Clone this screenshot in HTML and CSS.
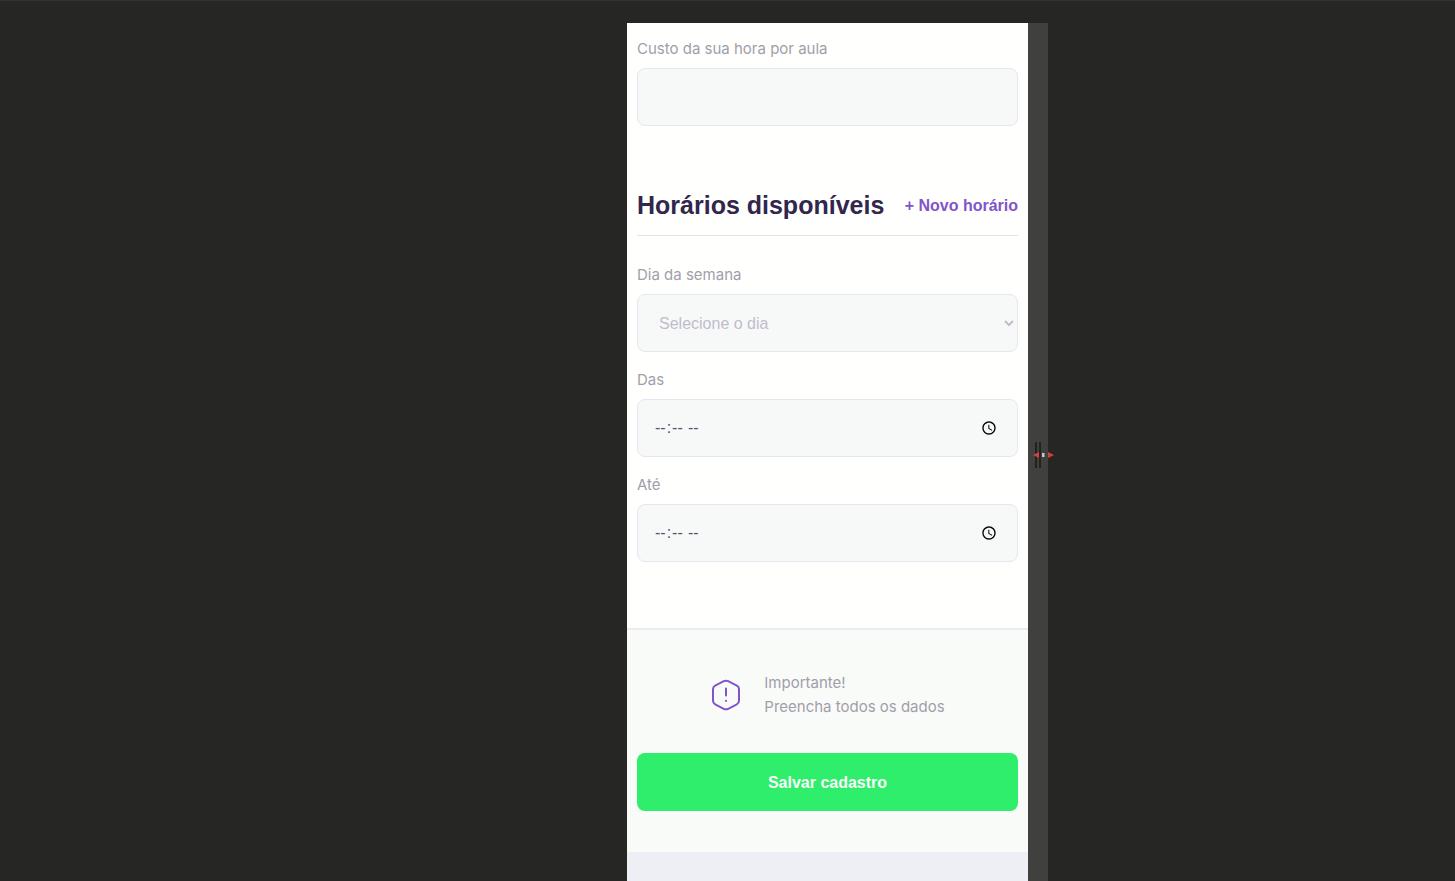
FILE: index.html
```html
<!DOCTYPE html>
<html lang="pt-BR">
<head>
<meta charset="utf-8">
<title>Cadastro</title>
<meta name="viewport" content="width=device-width, initial-scale=1">
<link rel="stylesheet" href="styles.css">
</head>
<body>
<div class="stage">
  <main class="screen">
    <form class="form">
      <section class="fields">
        <div class="field">
          <label for="cost">Custo da sua hora por aula</label>
          <input class="control" type="text" id="cost">
        </div>
        <div class="section-head">
          <h2>Horários disponíveis</h2>
          <button class="add" type="button">+ Novo horário</button>
        </div>
        <div class="field">
          <label for="day">Dia da semana</label>
          <select class="control select" id="day">
            <option>Selecione o dia</option>
          </select>
        </div>
        <div class="field">
          <label for="from">Das</label>
          <input class="control" type="time" id="from">
        </div>
        <div class="field">
          <label for="to">Até</label>
          <input class="control" type="time" id="to">
        </div>
      </section>
      <footer class="footer">
        <div class="notice">
          <svg class="notice-icon" viewBox="0 0 32 32" aria-hidden="true">
            <path d="M13.8 2.2a5 5 0 0 1 4.4 0l8.600 4.400a4 4 0 0 1 2.200 3.600v11.600a4 4 0 0 1-2.200 3.600l-8.600 4.400a5 5 0 0 1-4.400 0l-8.600-4.400A4 4 0 0 1 3 21.800V10.200a4 4 0 0 1 2.200-3.600z"/>
            <path d="M16 9.500v7M16 21.700v.3"/>
          </svg>
          <p>Importante!<br>Preencha todos os dados</p>
        </div>
        <button class="save" type="submit">Salvar cadastro</button>
      </footer>
    </form>
  </main>
  <div class="handle">
    <svg class="cursor" viewBox="0 0 22 26" aria-hidden="true">
      <path class="cursor-bars" d="M3 0v26M7 0v26"/>
      <path class="cursor-arrows" d="M0 13l6-3v6zM21 13l-6-3v6z"/>
      <path class="cursor-dot" d="M9 11h2.500v4H9z"/>
    </svg>
  </div>
</div>
</body>
</html>
```

FILE: styles.css
```css
* {
  box-sizing: border-box;
}

body {
  margin: 0;
  background: #262624;
  font-family: "Liberation Sans", Arial, sans-serif;
}

.stage {
  display: grid;
  grid-template-columns: 1fr minmax(0, 401px) 1fr;
  min-height: 100vh;
  padding: 22px 0 0 200px;
  border-top: 1px solid #333331;
}

.screen {
  grid-column: 2;
  background: #eeeff4;
}

.form {
  background: #fffffe;
}

.fields {
  padding: 14px 10px 66px;
}

.field label {
  display: block;
  margin-bottom: 7px;
  color: #a19ea9;
  font: 15px/24px Inter, sans-serif;
}

.field + .field {
  margin-top: 16px;
}

.control {
  display: block;
  width: 100%;
  height: 58px;
  padding: 0 16px;
  border: 1px solid #e6e6f0;
  border-radius: 8px;
  background: #f7f9f9;
  color: #5a5170;
  font: 16px "Liberation Sans", Arial, sans-serif;
}

.select {
  padding: 0 0 0 17px;
  color: #c1bccc;
}

.section-head {
  display: flex;
  align-items: center;
  justify-content: space-between;
  margin: 62px 0 27px;
  padding-bottom: 13px;
  border-bottom: 1px solid #e2e6ea;
}

.section-head h2 {
  margin: 0;
  color: #32264d;
  font-size: 25px;
  line-height: 34px;
  white-space: nowrap;
}

.add {
  padding: 2px 0 0;
  border: 0;
  background: none;
  color: #8055cb;
  font: bold 16px "Liberation Sans", Arial, sans-serif;
  white-space: nowrap;
  cursor: pointer;
}

.footer {
  padding: 41px 10px;
  border-top: 2px solid #ebebf1;
  background: #f9fbf9;
}

.notice {
  display: flex;
  align-items: center;
  justify-content: center;
  gap: 22px;
  margin-bottom: 34px;
  color: #a19ea9;
  font: 15px/24px Inter, sans-serif;
}

.notice p {
  margin: 0;
}

.notice-icon {
  width: 32px;
  height: 32px;
  fill: none;
  stroke: #8055cb;
  stroke-width: 2;
  stroke-linecap: round;
  stroke-linejoin: round;
}

.save {
  width: 100%;
  height: 58px;
  padding: 2px 0 0;
  border: 0;
  border-radius: 8px;
  background: #2eee6b;
  color: #f6fff8;
  font: bold 16px "Liberation Sans", Arial, sans-serif;
  cursor: pointer;
}

.handle {
  position: relative;
  width: 20px;
  background: #40403e;
}

.cursor {
  position: absolute;
  top: 419px;
  left: 5px;
  width: 22px;
  height: 26px;
}

.cursor-bars {
  stroke: #222220;
  stroke-width: 2;
}

.cursor-arrows {
  fill: #d5403a;
}

.cursor-dot {
  fill: #c8c8c8;
}
```
